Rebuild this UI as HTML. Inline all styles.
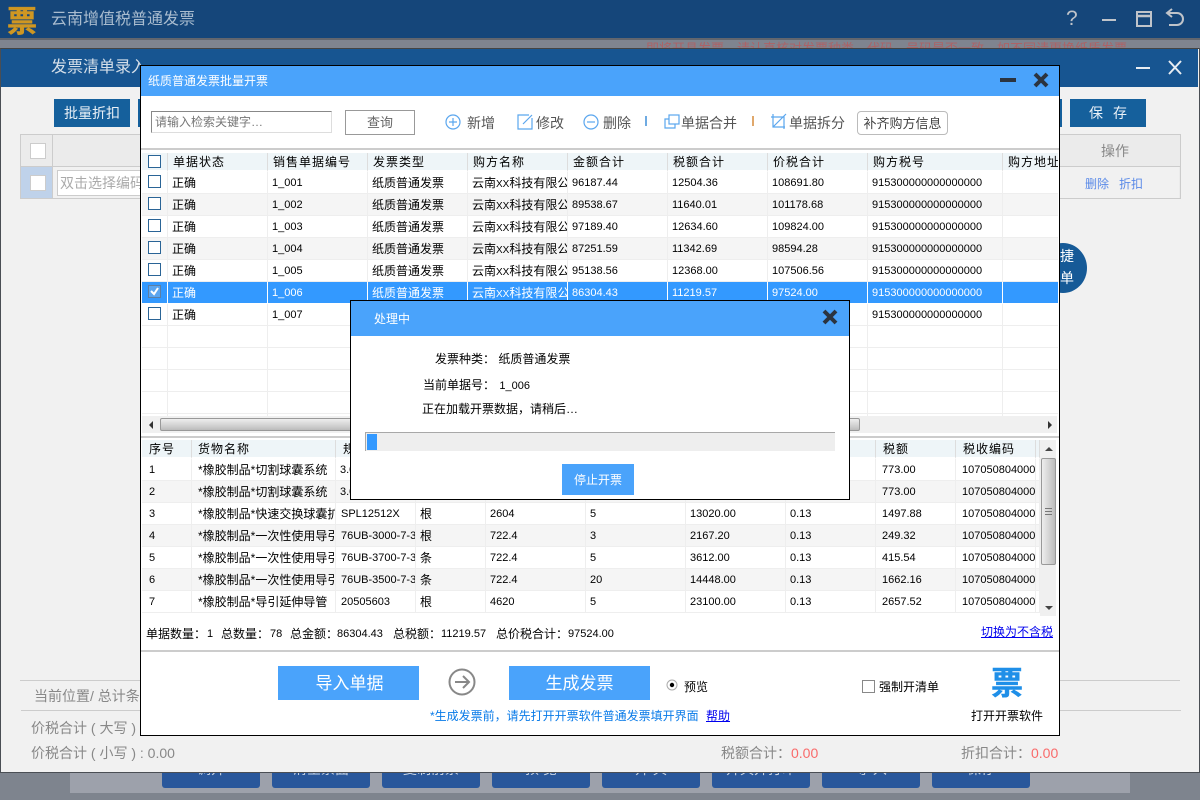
<!DOCTYPE html>
<html><head><meta charset="utf-8">
<style>
html,body{margin:0;padding:0}
body{width:1200px;height:800px;overflow:hidden;position:relative;background:#7e848e;font-family:"Liberation Sans","WenQuanYi Zen Hei","Noto Sans CJK SC",sans-serif;font-size:12px;color:#000}
.a{position:absolute}
.t{position:absolute;white-space:nowrap;line-height:16px;margin-top:1px}
table{border-collapse:separate;border-spacing:0;table-layout:fixed;position:absolute}
td{box-sizing:border-box;height:22px;padding:2px 0 0 4px;overflow:hidden;white-space:nowrap;border-right:1px solid #eee;border-bottom:1px solid #eee;font-size:12px;line-height:19px}
td.n{font-size:11px}
tr.e td{background:#f5f5f5}
tr.s td{background:#3399ff;color:#fff;border-bottom-color:#fff;border-right-color:#fff}
tr.h td{height:19px;padding-top:1px;line-height:16px;background:#eef5f8;letter-spacing:1px;border-bottom:2px solid #fff;border-right:1px solid #ddd}
i{font-style:normal;font-size:10px;line-height:1}
.cb{position:absolute;box-sizing:border-box;width:13px;height:13px;border:1px solid #2a6496;background:#fff;left:148px}
.bbtn{position:absolute;top:750px;height:38px;width:98px;background:#29579b;border-radius:3px;color:#c8d4e4;text-align:center;font-size:14px;line-height:38px}
.btn{position:absolute;background:#4aa3fb;color:#fff;text-align:center}
.g{font-size:14px;color:#888}
.d{font-size:14px;color:#555}
.m{font-size:11px}
</style></head><body>

<!-- app top bar -->
<div class="a" style="left:0;top:0;width:1200px;height:38px;background:#15467a"></div>
<div class="a" style="left:0;top:38px;width:1200px;height:2px;background:#62666e"></div>
<div class="a" style="left:0;top:40px;width:1200px;height:8px;background:#7f848f;overflow:hidden">
  <div class="t" style="left:646px;top:0;margin:0;font-size:13px;line-height:17px;color:#ad6266">即将开具发票，请认真核对发票种类、代码、号码是否一致，如不同请更换纸质发票</div>
</div>
<div class="t" style="left:7px;top:0;margin:0;font-size:30px;line-height:38px;font-weight:bold;color:#cf9722;-webkit-text-stroke:.5px #cf9722;font-family:'Noto Sans CJK SC',sans-serif">票</div>
<div class="t" style="left:51px;top:10px;margin:0;font-size:16px;line-height:20px;color:#a9bccf">云南增值税普通发票</div>
<div class="t" style="left:1066px;top:7px;margin:0;font-size:21px;line-height:24px;color:#c0c4ca">?</div>
<div class="a" style="left:1102px;top:19px;width:14px;height:2px;background:#c0c4ca"></div>
<svg class="a" style="left:1130px;top:8px" width="70" height="22" fill="none" stroke="#c0c4ca" stroke-width="2"><rect x="7" y="4" width="14" height="14"/><path d="M7 8h14" stroke-width="2.5"/><path d="M38 5h9a5.5 5.5 0 0 1 0 12h-8M42 1l-5 4 5 4"/></svg>

<!-- bottom strip behind -->
<div class="a" style="left:70px;top:750px;width:1060px;height:43px;background:#9da1ab"></div>
<div class="bbtn" style="left:162px">调开</div>
<div class="bbtn" style="left:272px">清空票面</div>
<div class="bbtn" style="left:382px">复制前票</div>
<div class="bbtn" style="left:492px">预 览</div>
<div class="bbtn" style="left:602px">开 具</div>
<div class="bbtn" style="left:712px">开具并打印</div>
<div class="bbtn" style="left:822px">导 入</div>
<div class="bbtn" style="left:932px">保存</div>

<!-- background panel -->
<div class="a" style="left:0;top:48px;width:1198px;height:723px;background:#f1f1f1;border:1px solid #4a4e54;border-top-color:#444"></div>
<div class="a" style="left:1px;top:49px;width:1197px;height:38px;background:#175591"></div>
<div class="t" style="left:51px;top:58px;margin:0;font-size:16px;line-height:20px;color:#d5dfe9">发票清单录入</div>
<div class="a" style="left:1136px;top:67px;width:14px;height:2px;background:#e8edf2"></div>
<svg class="a" style="left:1167px;top:60px" width="16" height="16" stroke="#e8edf2" stroke-width="2" fill="none"><path d="M2 1l12 13M14 1L2 14"/></svg>
<div class="a" style="left:54px;top:99px;width:76px;height:28px;background:#15609c;color:#eaf1f7;font-size:14px;line-height:29px;text-align:center">批量折扣</div>
<div class="a" style="left:138px;top:99px;width:10px;height:28px;background:#15609c"></div>
<div class="a" style="left:1050px;top:99px;width:12px;height:28px;background:#15609c"></div>
<div class="a" style="left:1070px;top:99px;width:76px;height:28px;background:#15609c;color:#eaf1f7;font-size:14px;line-height:29px;text-align:center;letter-spacing:10px;text-indent:10px">保存</div>
<div class="a" style="left:20px;top:134px;width:1159px;height:63px;border:1px solid #ccc;background:#ebebeb"></div>
<div class="a" style="left:21px;top:167px;width:1158px;height:31px;background:#f1f1f1"></div>
<div class="a" style="left:21px;top:166px;width:1159px;height:1px;background:#ccc"></div>
<div class="a" style="left:21px;top:167px;width:31px;height:31px;background:#bfd2ea"></div>
<div class="a" style="left:52px;top:135px;width:1px;height:63px;background:#ccc"></div>
<div class="a" style="left:20px;top:198px;width:1160px;height:1px;background:#ccc"></div>
<div class="a" style="left:30px;top:143px;width:14px;height:14px;background:#fff;border:1px solid #ccc"></div>
<div class="a" style="left:30px;top:175px;width:14px;height:14px;background:#fff;border:1px solid #ccc"></div>
<div class="a" style="left:57px;top:170px;width:90px;height:24px;background:#fff;border:1px solid #ccc"></div>
<div class="t g" style="left:60px;top:174px;color:#aaa">双击选择编码</div>
<div class="t g" style="left:1101px;top:142px">操作</div>
<div class="t" style="left:1085px;top:175px;color:#5a8ae8">删除</div>
<div class="t" style="left:1119px;top:175px;color:#5a8ae8">折扣</div>
<div class="a" style="left:1039px;top:243px;width:48px;height:50px;border-radius:50%;background:#165a97"></div>
<div class="t" style="left:1060px;top:247px;color:#fff;font-size:14px">捷</div>
<div class="t" style="left:1060px;top:269px;color:#fff;font-size:14px">单</div>
<div class="a" style="left:20px;top:680px;width:1160px;height:1px;background:#ccc"></div>
<div class="a" style="left:21px;top:710px;width:1160px;height:1px;background:#ccc"></div>
<div class="t g" style="left:34px;top:687px">当前位置/ 总计条</div>
<div class="t g" style="left:31px;top:719px">价税合计 ( 大写 )</div>
<div class="t g" style="left:31px;top:744px">价税合计 ( 小写 ) : 0.00</div>
<div class="t g" style="left:721px;top:744px">税额合计：<span style="color:#f96a6a">0.00</span></div>
<div class="t g" style="left:961px;top:744px">折扣合计：<span style="color:#f96a6a">0.00</span></div>

<!-- main modal -->
<div class="a" style="left:140px;top:65px;width:918px;height:669px;background:#fff;border:1px solid #000"></div>
<div class="a" style="left:141px;top:66px;width:918px;height:30px;background:#4aa3fb"></div>
<div class="t" style="left:148px;top:72px;color:#fff;font-size:12px">纸质普通发票批量开票</div>
<div class="a" style="left:1000px;top:78px;width:16px;height:4px;background:#2b3440"></div>
<svg class="a" style="left:1033px;top:72px" width="16" height="16" stroke="#2b3440" stroke-width="4" fill="none"><path d="M2 2l12 12M14 2L2 14"/></svg>

<div class="a" style="left:151px;top:111px;width:181px;height:22px;box-sizing:border-box;border:1px solid #ddd;border-top:1px solid #888;border-left:1px solid #888"></div>
<div class="t" style="left:155px;top:113px;color:#777">请输入检索关键字…</div>
<div class="a" style="left:345px;top:110px;width:70px;height:25px;box-sizing:border-box;border:1px solid #999;color:#666;text-align:center;line-height:24px;font-size:13px">查询</div>

<svg class="a" style="left:440px;top:109px" width="360" height="26" fill="none" stroke="#5aa6ee" stroke-width="1.2">
  <circle cx="13" cy="13" r="7"/><path d="M9 13h8M13 9v8"/>
  <path d="M89 6H78v14h14V9M92 6l-9 9"/>
  <circle cx="151" cy="13" r="7"/><path d="M147 13h8"/>
  <path d="M206 7v10" stroke="#3f8fd8" stroke-width="1.5"/>
  <path d="M229 10h-4v9h10v-4"/><rect x="229" y="6" width="10" height="9"/>
  <path d="M313 7v10" stroke="#d68a3a" stroke-width="1.5"/>
  <path d="M333 5v13h12M331 8h13v12M346 5l-13 13"/>
</svg>
<div class="t d" style="left:467px;top:114px">新增</div>
<div class="t d" style="left:536px;top:114px">修改</div>
<div class="t d" style="left:603px;top:114px">删除</div>
<div class="t d" style="left:681px;top:114px">单据合并</div>
<div class="t d" style="left:789px;top:114px">单据拆分</div>
<div class="a" style="left:857px;top:111px;width:91px;height:24px;box-sizing:border-box;border:1px solid #bbb;border-radius:4px;color:#444;text-align:center;line-height:23px;font-size:13px">补齐购方信息</div>
<div class="a" style="left:141px;top:148px;width:918px;height:2px;background:#ccc"></div>

<!-- top table -->
<div class="a" style="left:142px;top:153px;width:916px;height:263px;overflow:hidden">
<table style="left:0;top:0;width:960px">
<colgroup><col style="width:26px"><col style="width:100px"><col style="width:100px"><col style="width:100px"><col style="width:100px"><col style="width:100px"><col style="width:100px"><col style="width:100px"><col style="width:135px"><col style="width:99px"></colgroup>
<tr class="h"><td></td><td style="padding-left:5px">单据状态</td><td style="padding-left:5px">销售单据编号</td><td style="padding-left:5px">发票类型</td><td style="padding-left:5px">购方名称</td><td style="padding-left:5px">金额合计</td><td style="padding-left:5px">税额合计</td><td style="padding-left:5px">价税合计</td><td style="padding-left:5px">购方税号</td><td style="padding-left:5px">购方地址</td></tr>
<tr><td></td><td>正确</td><td class="n">1_001</td><td>纸质普通发票</td><td>云南<i>XX</i>科技有限公司</td><td class="n">96187.44</td><td class="n">12504.36</td><td class="n">108691.80</td><td class="n">915300000000000000</td><td></td></tr>
<tr class="e"><td></td><td>正确</td><td class="n">1_002</td><td>纸质普通发票</td><td>云南<i>XX</i>科技有限公司</td><td class="n">89538.67</td><td class="n">11640.01</td><td class="n">101178.68</td><td class="n">915300000000000000</td><td></td></tr>
<tr><td></td><td>正确</td><td class="n">1_003</td><td>纸质普通发票</td><td>云南<i>XX</i>科技有限公司</td><td class="n">97189.40</td><td class="n">12634.60</td><td class="n">109824.00</td><td class="n">915300000000000000</td><td></td></tr>
<tr class="e"><td></td><td>正确</td><td class="n">1_004</td><td>纸质普通发票</td><td>云南<i>XX</i>科技有限公司</td><td class="n">87251.59</td><td class="n">11342.69</td><td class="n">98594.28</td><td class="n">915300000000000000</td><td></td></tr>
<tr><td></td><td>正确</td><td class="n">1_005</td><td>纸质普通发票</td><td>云南<i>XX</i>科技有限公司</td><td class="n">95138.56</td><td class="n">12368.00</td><td class="n">107506.56</td><td class="n">915300000000000000</td><td></td></tr>
<tr class="s"><td></td><td>正确</td><td class="n">1_006</td><td>纸质普通发票</td><td>云南<i>XX</i>科技有限公司</td><td class="n">86304.43</td><td class="n">11219.57</td><td class="n">97524.00</td><td class="n">915300000000000000</td><td></td></tr>
<tr><td></td><td>正确</td><td class="n">1_007</td><td>纸质普通发票</td><td>云南<i>XX</i>科技有限公司</td><td class="n">88000.00</td><td class="n">11440.00</td><td class="n">99440.00</td><td class="n">915300000000000000</td><td></td></tr>
<tr><td></td><td></td><td></td><td></td><td></td><td></td><td></td><td></td><td></td><td></td></tr>
<tr><td></td><td></td><td></td><td></td><td></td><td></td><td></td><td></td><td></td><td></td></tr>
<tr><td></td><td></td><td></td><td></td><td></td><td></td><td></td><td></td><td></td><td></td></tr>
<tr><td></td><td></td><td></td><td></td><td></td><td></td><td></td><td></td><td></td><td></td></tr>
<tr><td></td><td></td><td></td><td></td><td></td><td></td><td></td><td></td><td></td><td></td></tr>
</table>
</div>
<div class="cb" style="top:155px"></div>
<div class="cb" style="top:175px"></div>
<div class="cb" style="top:197px"></div>
<div class="cb" style="top:219px"></div>
<div class="cb" style="top:241px"></div>
<div class="cb" style="top:263px"></div>
<div class="cb" style="top:285px;background:#5ba5ef;border-color:#5b7fa5"></div>
<svg class="a" style="left:148px;top:285px" width="13" height="13" fill="none" stroke="#fff" stroke-width="2"><path d="M3 6l3 3 4-6"/></svg>
<div class="cb" style="top:307px"></div>

<!-- horizontal scrollbar -->
<div class="a" style="left:142px;top:416px;width:915px;height:17px;background:#f0f0f0"></div>
<div class="a" style="left:160px;top:418px;width:700px;height:13px;box-sizing:border-box;border:1px solid #999;border-radius:2px;background:linear-gradient(#eee,#ccc 70%,#bbb)"></div>
<div class="a" style="left:149px;top:421px;width:0;height:0;border:4px solid transparent;border-right:4px solid #333;border-left:0"></div>
<div class="a" style="left:1048px;top:421px;width:0;height:0;border:4px solid transparent;border-left:4px solid #333;border-right:0"></div>
<div class="a" style="left:141px;top:436px;width:918px;height:2px;background:#ccc"></div>

<!-- lower table -->
<div class="a" style="left:142px;top:440px;width:898px;height:173px;overflow:hidden">
<table style="left:0;top:0;width:898px">
<colgroup><col style="width:50px"><col style="width:144px"><col style="width:80px"><col style="width:70px"><col style="width:100px"><col style="width:100px"><col style="width:100px"><col style="width:90px"><col style="width:80px"><col style="width:80px"><col style="width:4px"></colgroup>
<tr class="h"><td style="padding-left:7px">序号</td><td style="padding-left:6px">货物名称</td><td style="padding-left:7px">规格型号</td><td>单位</td><td>单价</td><td>数量</td><td>金额</td><td>税率</td><td style="padding-left:7px">税额</td><td style="padding-left:7px">税收编码</td><td style="padding:0"></td></tr>
<tr><td class="n" style="padding-left:7px">1</td><td style="padding-left:6px">*橡胶制品*切割球囊系统</td><td class="n">3.0</td><td>根</td><td></td><td></td><td></td><td></td><td class="n" style="padding-left:6px">773.00</td><td class="n" style="padding-left:6px">10705080400000000</td><td style="padding:0"></td></tr>
<tr class="e"><td class="n" style="padding-left:7px">2</td><td style="padding-left:6px">*橡胶制品*切割球囊系统</td><td class="n">3.0</td><td>根</td><td></td><td></td><td></td><td></td><td class="n" style="padding-left:6px">773.00</td><td class="n" style="padding-left:6px">10705080400000000</td><td style="padding:0"></td></tr>
<tr><td class="n" style="padding-left:7px">3</td><td style="padding-left:6px">*橡胶制品*快速交换球囊扩张</td><td class="n" style="padding-left:5px">SPL12512X</td><td>根</td><td class="n">2604</td><td class="n">5</td><td class="n">13020.00</td><td class="n">0.13</td><td class="n" style="padding-left:6px">1497.88</td><td class="n" style="padding-left:6px">10705080400000000</td><td style="padding:0"></td></tr>
<tr class="e"><td class="n" style="padding-left:7px">4</td><td style="padding-left:6px">*橡胶制品*一次性使用导引导</td><td class="n" style="padding-left:5px">76UB-3000-7-3</td><td>根</td><td class="n">722.4</td><td class="n">3</td><td class="n">2167.20</td><td class="n">0.13</td><td class="n" style="padding-left:6px">249.32</td><td class="n" style="padding-left:6px">10705080400000000</td><td style="padding:0"></td></tr>
<tr><td class="n" style="padding-left:7px">5</td><td style="padding-left:6px">*橡胶制品*一次性使用导引导</td><td class="n" style="padding-left:5px">76UB-3700-7-3</td><td>条</td><td class="n">722.4</td><td class="n">5</td><td class="n">3612.00</td><td class="n">0.13</td><td class="n" style="padding-left:6px">415.54</td><td class="n" style="padding-left:6px">10705080400000000</td><td style="padding:0"></td></tr>
<tr class="e"><td class="n" style="padding-left:7px">6</td><td style="padding-left:6px">*橡胶制品*一次性使用导引导</td><td class="n" style="padding-left:5px">76UB-3500-7-3</td><td>条</td><td class="n">722.4</td><td class="n">20</td><td class="n">14448.00</td><td class="n">0.13</td><td class="n" style="padding-left:6px">1662.16</td><td class="n" style="padding-left:6px">10705080400000000</td><td style="padding:0"></td></tr>
<tr><td class="n" style="padding-left:7px">7</td><td style="padding-left:6px">*橡胶制品*导引延伸导管</td><td class="n" style="padding-left:5px">20505603</td><td>根</td><td class="n">4620</td><td class="n">5</td><td class="n">23100.00</td><td class="n">0.13</td><td class="n" style="padding-left:6px">2657.52</td><td class="n" style="padding-left:6px">10705080400000000</td><td style="padding:0"></td></tr>
<tr><td></td><td></td><td></td><td></td><td></td><td></td><td></td><td></td><td></td><td></td><td style="padding:0"></td></tr>
</table>
</div>
<!-- vertical scrollbar -->
<div class="a" style="left:1040px;top:440px;width:16px;height:176px;background:#f0f0f0"></div>
<div class="a" style="left:1041px;top:458px;width:15px;height:107px;box-sizing:border-box;border:1px solid #999;border-radius:2px;background:linear-gradient(90deg,#eee,#ccc 70%,#bbb)"></div>
<div class="a" style="left:1045px;top:508px;width:7px;height:7px;border-top:1px solid #777;border-bottom:1px solid #777;box-sizing:border-box"></div>
<div class="a" style="left:1045px;top:511px;width:7px;height:1px;background:#777"></div>
<div class="a" style="left:1045px;top:447px;width:0;height:0;border:4px solid transparent;border-bottom:4px solid #444;border-top:0"></div>
<div class="a" style="left:1045px;top:606px;width:0;height:0;border:4px solid transparent;border-top:4px solid #444;border-bottom:0"></div>

<!-- summary -->
<div class="t" style="left:146px;top:625px">单据数量：</div><div class="t m" style="left:207px;top:625px">1</div>
<div class="t" style="left:221px;top:625px">总数量：</div><div class="t m" style="left:270px;top:625px">78</div>
<div class="t" style="left:290px;top:625px">总金额：</div><div class="t m" style="left:337px;top:625px">86304.43</div>
<div class="t" style="left:393px;top:625px">总税额：</div><div class="t m" style="left:441px;top:625px">11219.57</div>
<div class="t" style="left:496px;top:625px">总价税合计：</div><div class="t m" style="left:568px;top:625px">97524.00</div>
<div class="t" style="left:981px;top:623px;color:#0000ee;text-decoration:underline">切换为不含税</div>
<div class="a" style="left:141px;top:650px;width:918px;height:2px;background:#ccc"></div>

<div class="btn" style="left:278px;top:666px;width:141px;height:34px;font-size:17px;line-height:35px;text-indent:2px">导入单据</div>
<svg class="a" style="left:448px;top:668px" width="28" height="28" fill="none" stroke="#888" stroke-width="2"><circle cx="14" cy="14" r="12.5"/><path d="M7 14h13M15 8l6 6-6 6"/></svg>
<div class="btn" style="left:509px;top:666px;width:141px;height:34px;font-size:17px;line-height:35px">生成发票</div>
<svg class="a" style="left:666px;top:679px" width="13" height="13"><circle cx="6" cy="6" r="5" fill="#fff" stroke="#aaa"/><circle cx="6" cy="6" r="2.2" fill="#000"/></svg>
<div class="t" style="left:684px;top:678px">预览</div>
<div class="a" style="left:862px;top:680px;width:11px;height:11px;border:1px solid #888;background:#fff"></div>
<div class="t" style="left:879px;top:678px">强制开清单</div>
<div class="t" style="left:991px;top:662px;margin:0;font-size:32px;line-height:38px;font-weight:bold;color:#1f8fe8;-webkit-text-stroke:.5px #1f8fe8;font-family:'Noto Sans CJK SC',sans-serif">票</div>
<div class="t" style="left:971px;top:707px">打开开票软件</div>
<div class="t" style="left:430px;top:707px;color:#0a7be8">*生成发票前，请先打开开票软件普通发票填开界面</div>
<div class="t" style="left:706px;top:707px;color:#0000ee;text-decoration:underline">帮助</div>

<!-- processing dialog -->
<div class="a" style="left:350px;top:300px;width:498px;height:198px;background:#fff;border:1px solid #000"></div>
<div class="a" style="left:351px;top:301px;width:498px;height:35px;background:#4aa3fb"></div>
<div class="t" style="left:374px;top:310px;color:#fff">处理中</div>
<svg class="a" style="left:822px;top:309px" width="16" height="16" stroke="#2b3440" stroke-width="4" fill="none"><path d="M2 2l12 12M14 2L2 14"/></svg>
<div class="t" style="left:435px;top:350px">发票种类： 纸质普通发票</div>
<div class="t" style="left:423px;top:376px">当前单据号： <span style="font-size:11px;margin-left:1px">1_006</span></div>
<div class="t" style="left:422px;top:400px">正在加载开票数据，请稍后…</div>
<div class="a" style="left:365px;top:432px;width:470px;height:19px;box-sizing:border-box;background:#eee;border-top:1px solid #a8a8a8;border-left:1px solid #a8a8a8"></div>
<div class="a" style="left:367px;top:434px;width:10px;height:16px;background:#3399ff"></div>
<div class="btn" style="left:562px;top:464px;width:72px;height:31px;font-size:12px;line-height:33px">停止开票</div>
</body></html>
